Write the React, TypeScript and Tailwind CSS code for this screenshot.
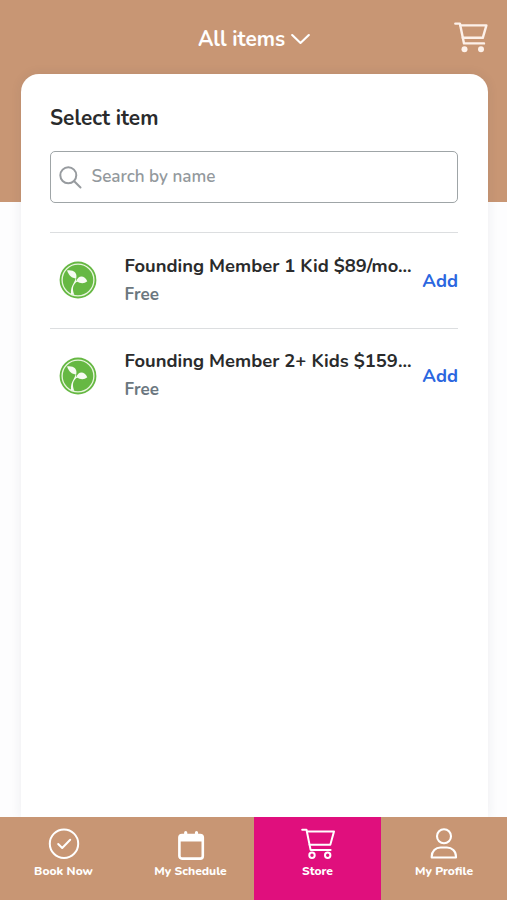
import type { ReactNode } from 'react';
import clsx from 'clsx';

interface Item {
  id: number;
  name: string;
  price: string;
}

interface Tab {
  label: string;
  icon: ReactNode;
  active?: boolean;
}

const items: Item[] = [
  { id: 1, name: 'Founding Member 1 Kid $89/mo...', price: 'Free' },
  { id: 2, name: 'Founding Member 2+ Kids $159...', price: 'Free' },
];

function HeaderCartIcon() {
  return (
    <svg width="34" height="32" viewBox="0 0 34 32" fill="none" stroke="#fdf1ea" strokeWidth="2.4" strokeLinecap="round" strokeLinejoin="round">
      <path d="M1.3 1.6h4.6L10 21.4h20" />
      <path d="M6.4 3.4h26l-3.6 12.4h-20" />
      <circle cx="10.5" cy="27.3" r="3" fill="#fdf1ea" stroke="none" />
      <circle cx="27" cy="27.3" r="3" fill="#fdf1ea" stroke="none" />
    </svg>
  );
}

function StoreIcon() {
  return (
    <svg width="34" height="32" viewBox="0 0 34 32" fill="none" stroke="#fff" strokeWidth="2" strokeLinecap="round" strokeLinejoin="round">
      <path d="M1.2 1.7h4.3L9.600 21.900h20" />
      <path d="M6 3.5h27l-3.7 13.2H8.600" />
      <circle cx="11" cy="27.3" r="2.7" />
      <circle cx="26.7" cy="27.3" r="2.7" />
    </svg>
  );
}

function CheckIcon() {
  return (
    <svg width="32" height="32" viewBox="0 0 32 32" fill="none" stroke="#fff" strokeWidth="2" strokeLinecap="round" strokeLinejoin="round">
      <circle cx="16" cy="15.7" r="14.2" />
      <path d="m10.2 16 4 4 8-8.3" />
    </svg>
  );
}

function CalendarIcon() {
  return (
    <svg width="32" height="32" viewBox="0 0 32 32" fill="none">
      <rect x="4.4" y="7" width="23.4" height="23.6" rx="2.6" stroke="#fff" strokeWidth="2.6" />
      <path d="M4.4 7.500h23.400v6h-23.400z" fill="#fff" />
      <path d="M10.700 4.700v4M21.500 4.700v4" stroke="#fff" strokeWidth="3.200" strokeLinecap="round" />
    </svg>
  );
}

function ProfileIcon() {
  return (
    <svg width="32" height="32" viewBox="0 0 32 32" fill="none" stroke="#fff" strokeWidth="2.1" strokeLinejoin="round">
      <circle cx="16" cy="8.3" r="7" />
      <path d="M3.700 29.500v-1c0-5.400 4-9 8.800-9h6.500c4.800 0 9 3.600 9 9v1Z" />
    </svg>
  );
}

function SproutLogo() {
  return (
    <svg width="38" height="38" viewBox="0 0 38 38" fill="none">
      <circle cx="19" cy="19" r="18.4" fill="#66b843" />
      <circle cx="19" cy="19" r="15.9" stroke="#e9f6df" strokeWidth="1.3" />
      <path d="M8 9.500c6.500-.800 10.300 2 9.300 7.800C12.500 17.300 10 14.500 8 9.500Z" fill="#f6fbf2" />
      <path d="M17.300 20.300c1.500-6.300 8.500-6.300 11 0-3.300 2.700-6.800 2.300-11 0Z" fill="#f6fbf2" />
      <path d="M16.300 16c1.500 4-5.300 8-4.300 17l3.300 1C13 28 13.500 23.500 18.500 20.300l-1.500-.5c.5-1.300.2-2.800-.7-3.800Z" fill="#f6fbf2" />
    </svg>
  );
}

const tabs: Tab[] = [
  { label: 'Book Now', icon: <CheckIcon /> },
  { label: 'My Schedule', icon: <CalendarIcon /> },
  { label: 'Store', icon: <StoreIcon />, active: true },
  { label: 'My Profile', icon: <ProfileIcon /> },
];

function ItemRow({ item }: { item: Item }) {
  return (
    <li className="flex h-[95.5px] items-center border-t border-[#dcdee0]">
      <div className="ml-[9px] w-[65.5px] shrink-0">
        <SproutLogo />
      </div>
      <div className="min-w-0 flex-1">
        <p className="text-[18.4px] leading-7 font-bold whitespace-nowrap text-[#2a2b2c]">{item.name}</p>
        <p className="text-[17px] leading-[29px] font-bold text-[#6b7780]">{item.price}</p>
      </div>
      <button className="pt-px text-[18.4px] leading-7 font-bold text-[#2b67e0]">Add</button>
    </li>
  );
}

export default function App() {
  return (
    <div className="flex h-[900px] w-full flex-col overflow-hidden bg-[linear-gradient(#c89674_202.5px,#fdfdfe_202.5px)] font-['Nunito','Lato',sans-serif]">
      {/* Header */}
      <header className="grid h-[74px] shrink-0 grid-cols-[1fr_auto_1fr] items-center">
        <span />
        <button className="flex items-center gap-1.5 pt-[3px] pl-px text-[20.8px] leading-7 font-bold text-white">
          <span>All items</span>
          <svg width="19" height="12" viewBox="0 0 19 12" fill="none" stroke="#fff" strokeWidth="2.1" strokeLinecap="round" strokeLinejoin="round">
            <path d="m1.2 2 8.3 8 8.3-8" />
          </svg>
        </button>
        <div className="mr-[19.5px] justify-self-end pt-0.5">
          <HeaderCartIcon />
        </div>
      </header>

      {/* Item list */}
      <main className="mr-[19.5px] ml-[20.5px] flex-1 rounded-t-[18px] bg-white px-[29.5px] pt-[29px] shadow-[0_0_12px_rgba(40,45,80,0.08)]">
        <h1 className="pt-px text-[20.8px] leading-7 font-bold text-[#2a2b2c]">Select item</h1>
        <div className="mt-[19px] flex h-[52px] items-center rounded-[5px] border border-[#9fa5a7] pl-2">
          <svg width="23" height="23" viewBox="0 0 23 23" fill="none" stroke="#979b9f" strokeWidth="2" strokeLinecap="round">
            <circle cx="9.3" cy="9.3" r="8" />
            <path d="m15.2 15.2 6.3 6.3" />
          </svg>
          <span className="ml-[9.5px] text-[17.1px] leading-6 font-semibold text-[#93999d]">Search by name</span>
        </div>
        <ul className="mt-[29px]">
          {items.map((item) => (
            <ItemRow key={item.id} item={item} />
          ))}
        </ul>
      </main>

      {/* Bottom tabs */}
      <nav className="relative grid h-[83px] shrink-0 grid-cols-[127px_127px_127px_126px] bg-[#c89674]">
        {tabs.map((tab) => (
          <button
            key={tab.label}
            className={clsx('flex flex-col items-center pt-[11px] text-white', tab.active && 'bg-[#e00f7d]')}
          >
            {tab.icon}
            <span className="mt-[3px] text-[12px] leading-4 font-extrabold">{tab.label}</span>
          </button>
        ))}
      </nav>
    </div>
  );
}
